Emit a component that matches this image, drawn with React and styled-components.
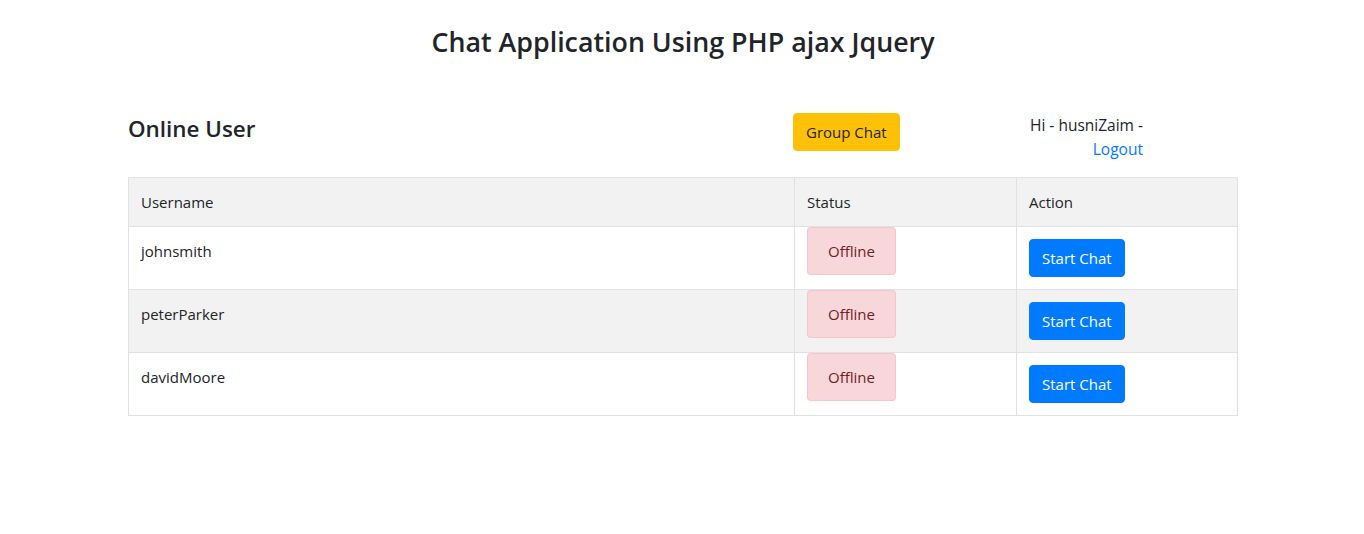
import React from "react";
import styled, { createGlobalStyle } from "styled-components";

const Global = createGlobalStyle`
  html, body { margin: 0; padding: 0; background: #fff; }
  body {
    font-family: "Segoe UI", "Open Sans", "Noto Sans", sans-serif;
    font-size: 15px;
    line-height: 24px;
    color: #212529;
  }
  * { box-sizing: border-box; }
`;

const Container = styled.div`
  width: 1140px;
  margin: 0 auto;
  padding: 0 14px 0 16px;
`;

const Title = styled.h3`
  margin: 0;
  padding-top: 25px;
  font-size: 26.8px;
  font-weight: 600;
  line-height: 34px;
  text-align: center;
`;

const HeaderRow = styled.div`
  display: grid;
  grid-template-columns: 665px 237px 1fr;
  align-items: start;
  margin-top: 54px;
`;

const SubTitle = styled.h4`
  margin: 1px 0 0;
  font-size: 22.4px;
  font-weight: 600;
  line-height: 29px;
`;

const Button = styled.button`
  display: inline-block;
  font-family: inherit;
  font-size: 15px;
  line-height: 24px;
  padding: 6px 12px;
  border-radius: 4px;
  border: 1px solid ${(p) => (p.$variant === "warning" ? "#ffc107" : "#007bff")};
  background: ${(p) => (p.$variant === "warning" ? "#ffc107" : "#007bff")};
  color: ${(p) => (p.$variant === "warning" ? "#212529" : "#fff")};
  cursor: pointer;
  vertical-align: middle;
`;

const UserBox = styled.div`
  display: inline-block;
  justify-self: start;
  text-align: right;
  font-size: 15.5px;
  line-height: 24px;
`;

const Link = styled.a`
  color: #007bff;
  text-decoration: none;
`;

const Table = styled.table`
  width: 100%;
  margin-top: 16px;
  border-collapse: collapse;
  border: 1px solid #dee2e6;
`;

const Row = styled.tr`
  background: ${(p) => (p.$striped ? "#f2f2f2" : "#fff")};
`;

const Cell = styled.td`
  padding: 12px;
  vertical-align: top;
  border: 1px solid #dee2e6;
  width: ${(p) => p.$w || "auto"};
  line-height: 24px;
`;

const StatusBadge = styled.span`
  padding: 13px 20px;
  border: 1px solid #f5c6cb;
  border-radius: 4px;
  background: #f8d7da;
  color: #721c24;
`;

const users = ["johnsmith", "peterParker", "davidMoore"];

export default function App() {
  return (
    <>
      <Global />
      <Container>
        <Title>Chat Application Using PHP ajax Jquery</Title>
        <HeaderRow>
          <SubTitle>Online User</SubTitle>
          <div>
            <Button $variant="warning">Group Chat</Button>
          </div>
          <UserBox>
            Hi - husniZaim -
            <br />
            <Link href="#">Logout</Link>
          </UserBox>
        </HeaderRow>
        <Table>
          <tbody>
            <Row $striped>
              <Cell $w="666px">Username</Cell>
              <Cell $w="222px">Status</Cell>
              <Cell>Action</Cell>
            </Row>
            {users.map((u, i) => (
              <Row key={u} $striped={i % 2 === 1}>
                <Cell>{u}</Cell>
                <Cell>
                  <StatusBadge>Offline</StatusBadge>
                </Cell>
                <Cell>
                  <Button>Start Chat</Button>
                </Cell>
              </Row>
            ))}
          </tbody>
        </Table>
      </Container>
    </>
  );
}
